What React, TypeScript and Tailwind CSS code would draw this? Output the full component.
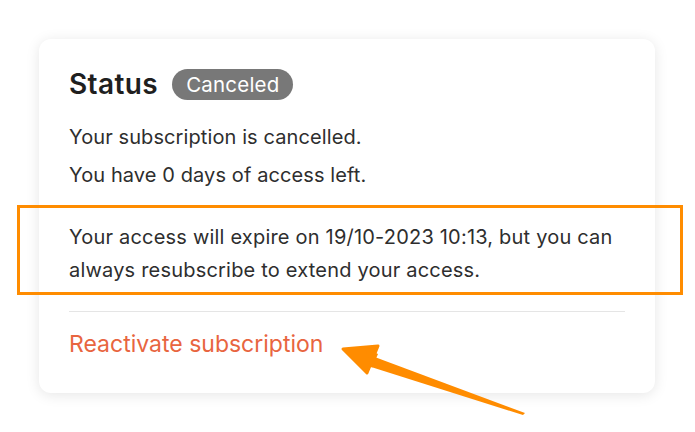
import React from 'react';

const font = { fontFamily: 'Inter, "Noto Sans", sans-serif' };

// annotation arrow drawn over the page
const Arrow = () => (
  <svg className="absolute left-0 top-0 pointer-events-none" width="695" height="432" viewBox="0 0 695 432">
    <polygon points="525,413 372,356 368,366 523,415" fill="#ff8c00" />
    <path d="M343,349 L378,346 L367,373 Z" fill="#ff8c00" stroke="#ff8c00" strokeWidth="3" strokeLinejoin="round" />
    <polygon points="378,354 365,348 372,368" fill="#ff8c00" />
  </svg>
);

export default function App() {
  return (
    <div className="relative w-[695px] h-[432px] bg-white overflow-hidden" style={font}>
      <div className="ml-[39px] mt-[39px] w-[616px] rounded-[12px] bg-white px-[30px] pt-[30px] pb-[33px] shadow-[0_2px_14px_rgba(0,0,0,0.10)] text-[#2e2e2e]">
        <div className="flex items-center gap-[14px] h-[30px]">
          <h2 className="text-[28px] font-semibold text-[#1f1f1f] tracking-[0.4px]">Status</h2>
          <span className="h-[31px] px-[14px] rounded-full bg-[#787878] text-white text-[20.5px] leading-[31px] tracking-[0.2px]">Canceled</span>
        </div>
        <div className="mt-[19px] text-[20px] leading-[38px] tracking-[0.1px]">
          <p>Your subscription is cancelled.</p>
          <p>You have 0 days of access left.</p>
        </div>
        <p className="mt-[27px] text-[20px] leading-[33px] tracking-[0.2px] whitespace-nowrap">
          Your access will expire on 19/10-2023 10:13, but you can
          <br />
          always resubscribe to extend your access.
        </p>
        <div className="mt-[24px] border-t border-[#e5e5e5]" />
        <button className="mt-[16px] block text-[23px] leading-[32px] text-[#e8653f]">Reactivate subscription</button>
      </div>
      <div className="absolute left-[17px] top-[205px] w-[666px] h-[90px] border-[3px] border-[#ff8c00]" />
      <Arrow />
    </div>
  );
}
